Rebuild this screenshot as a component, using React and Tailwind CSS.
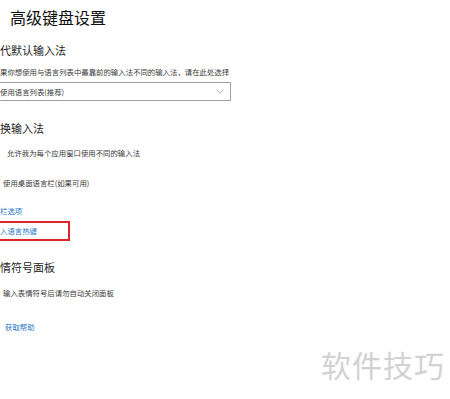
import React from "react";

const F = { fontFamily: '"Noto Sans CJK SC", "Noto Sans", sans-serif' };

export default function App() {
  return (
    <div
      className="relative w-[450px] h-[399px] overflow-hidden bg-white text-[#262626]"
      style={F}
    >
      <div className="h-[34px] pl-[10px] text-[16px] leading-[34px] text-[#111]">高级键盘设置</div>
      <div className="h-[32px] text-[11px] leading-[32px]">代默认输入法</div>
      <div className="h-[12px] text-[7.4px] leading-[12px] text-[#3a3a3a] whitespace-nowrap">
        果你想使用与语言列表中最靠前的输入法不同的输入法，请在此处选择
      </div>
      <div className="mt-[4px] h-[19px] w-[231px] border border-[#a0a0a0] border-l-0 flex items-center justify-between pr-[6px]">
        <span className="text-[7.4px] leading-[17px] text-[#3a3a3a]">使用语言列表(推荐)</span>
        <svg width="8" height="5" viewBox="0 0 8 5" fill="none">
          <path d="M0.5 0.7 L4 4.2 L7.5 0.7" stroke="#9a9a9a" strokeWidth="0.8" />
        </svg>
      </div>
      <div className="mt-[15px] h-[24px] text-[11px] leading-[24px]">换输入法</div>
      <div className="h-[26px] pl-[7px] text-[7.4px] leading-[26px] text-[#3a3a3a]">允许我为每个应用窗口使用不同的输入法</div>
      <div className="h-[34px] pl-[3px] text-[7.4px] leading-[34px] text-[#3a3a3a]">使用桌面语言栏(如果可用)</div>
      <div className="h-[21px] text-[7.4px] leading-[21px] text-[#2a78c8]">栏选项</div>
      <div className="h-[20px] w-[70px] border-2 border-[#e0222c] border-l-0 flex items-center">
        <span className="text-[7.4px] leading-[16px] text-[#2a78c8]">入语言热键</span>
      </div>
      <div className="mt-[12px] h-[28px] text-[11px] leading-[28px]">情符号面板</div>
      <div className="h-[24px] pl-[3px] text-[7.4px] leading-[24px] text-[#3a3a3a]">输入表情符号后请勿自动关闭面板</div>
      <div className="h-[44px] pl-[5px] text-[7.4px] leading-[44px] text-[#2a78c8]">获取帮助</div>
      <div className="absolute right-[5px] top-[344px] text-[30px] leading-[40px] text-[#d2d2d2] tracking-[1px]">
        软件技巧
      </div>
    </div>
  );
}
